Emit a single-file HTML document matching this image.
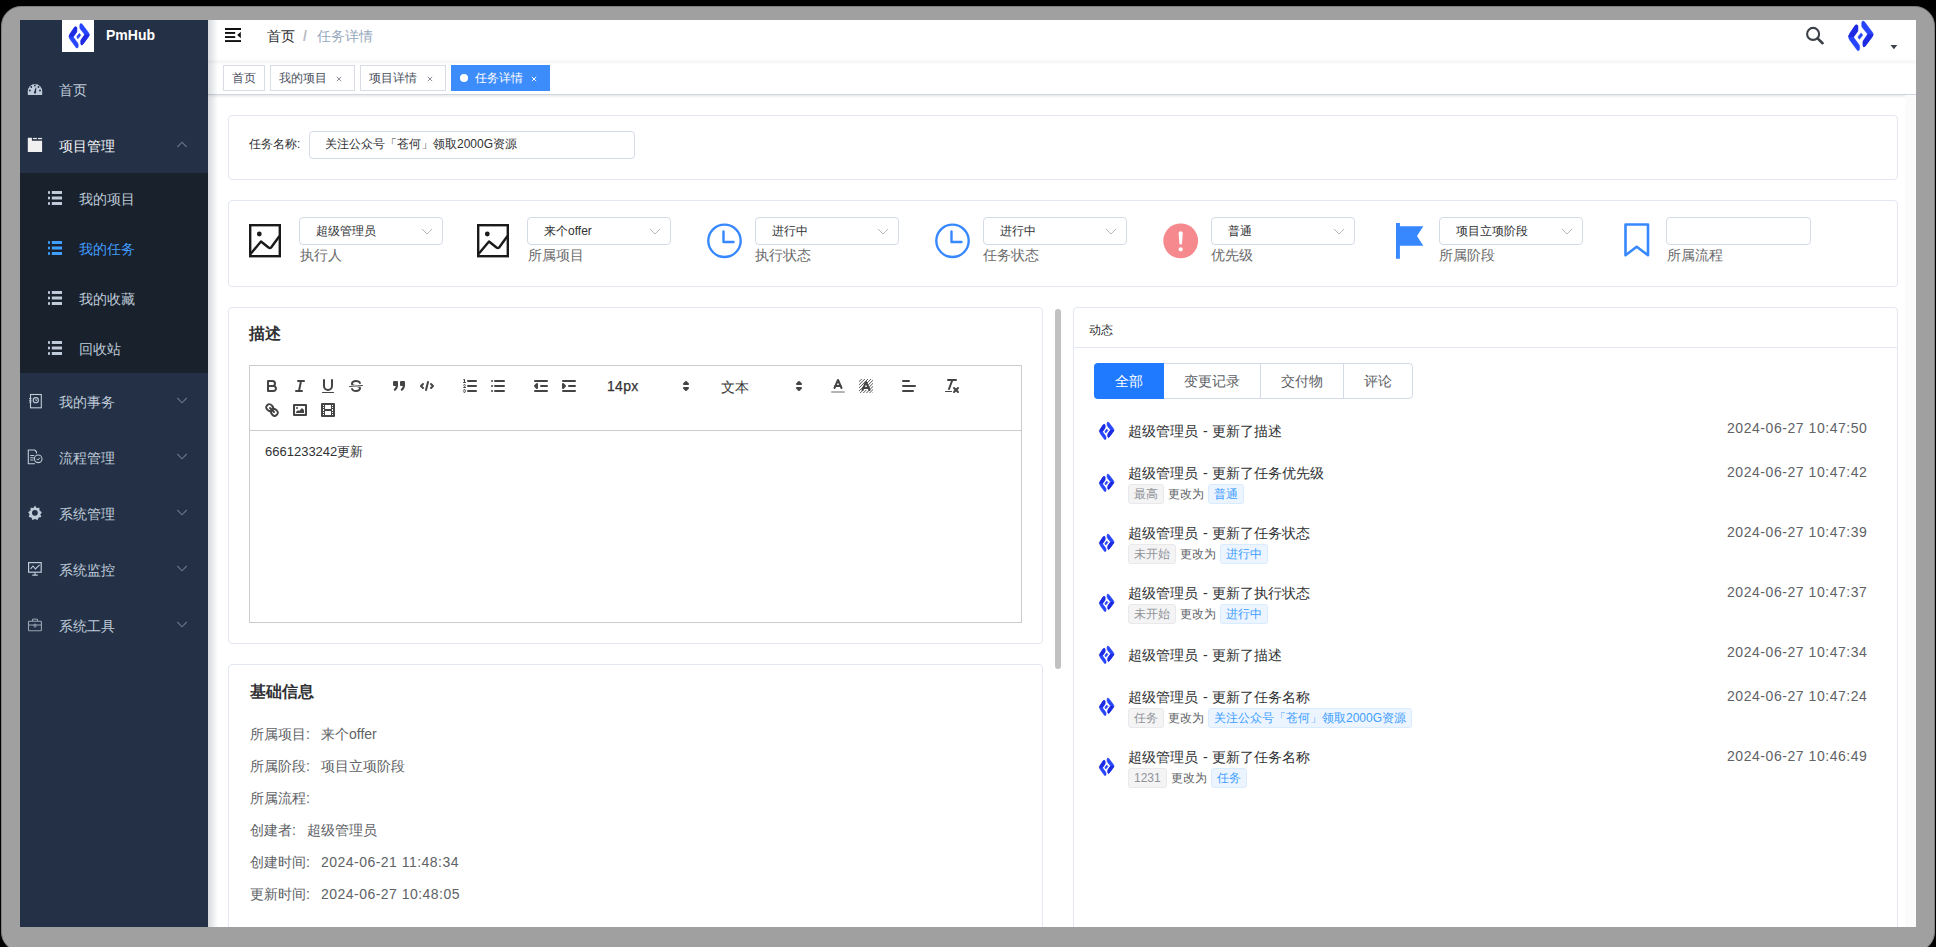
<!DOCTYPE html>
<html><head><meta charset="utf-8">
<style>
*{box-sizing:border-box;margin:0;padding:0}
html,body{width:1936px;height:947px;overflow:hidden;background:#000;font-family:"Liberation Sans",sans-serif;color:#303133}
.a{position:absolute}
#frame{position:absolute;left:1px;top:6px;width:1934px;height:946px;background:#a0a0a0;border-radius:20px;border:1px solid #7e7e7e}
#app{position:absolute;left:20px;top:20px;width:1896px;height:907px;background:#fff;overflow:hidden}
#in{position:absolute;left:-20px;top:-20px;width:1936px;height:947px}
#side{position:absolute;left:20px;top:20px;width:188px;height:907px;background:#233045}
.t{position:absolute;white-space:nowrap}
.mt{font-size:14px;color:#bfcbd9;line-height:20px}
.chev{position:absolute;width:10px;height:6px}
.card{position:absolute;background:#fff;border:1px solid #e2e7f2;border-radius:4px}
.sel{position:absolute;top:217px;width:144px;height:28px;border:1px solid #d4dae6;border-radius:4px;background:#fff}
.sel .v{position:absolute;left:16px;top:6px;font-size:12px;line-height:14px;color:#303133}
.sel svg{position:absolute;left:121px;top:10px}
.lab{position:absolute;top:247px;font-size:14px;line-height:16px;color:#6b6b6b}
.tag{position:absolute;top:65px;height:26px;line-height:24px;border:1px solid #d8dce5;color:#495060;background:#fff;font-size:12px;padding-left:8px}
.tag .x{position:absolute;font-size:11px;top:0}
.tb{position:absolute}
.row .ttl{position:absolute;left:1128px;font-size:14px;line-height:16px;color:#303133;word-spacing:1px}
.tg{position:absolute;height:20px;border-radius:3px;font-size:12px;line-height:18px;padding:0 5px;border:1px solid}
.tg.g{background:#f4f4f5;border-color:#e9e9eb;color:#909399}
.tg.b{background:#ecf5ff;border-color:#d9ecff;color:#409eff}
.cto{position:absolute;font-size:12px;line-height:17px;color:#606266}
.tm{position:absolute;left:1727px;font-size:14px;line-height:16px;color:#606266;letter-spacing:.55px}
.info{position:absolute;left:250px;font-size:14px;line-height:16px;color:#606266}
</style></head><body>
<svg width="0" height="0" style="position:absolute">
 <defs>
  <symbol id="logo" viewBox="0 0 15 18">
   <g fill="none" stroke-width="3.3" stroke-linecap="round" stroke-linejoin="round">
   <path d="M4.9 3.9 L1.9 9.1" stroke="#1f30e8"/>
   <path d="M1.9 9.1 Q1.6 9.6 2 10.2 L5.9 16.4" stroke="#2645fb"/>
   <path d="M8.7 1.5 L12.7 7.4 Q13 8 12.7 8.6" stroke="#2645fb"/>
   <path d="M12.7 8.6 L9.3 13.8" stroke="#1f30e8"/>
   </g>
   <path d="M6.4 10 L7.9 8.2" stroke="#2443f7" stroke-width="2.3" stroke-linecap="round"/>
  </symbol>
  <symbol id="logoL" viewBox="0 0 15 18">
   <g fill="none" stroke-width="2.8" stroke-linecap="round" stroke-linejoin="round">
   <path d="M4.9 3.9 L1.9 9.1" stroke="#1f30e8"/>
   <path d="M1.9 9.1 Q1.6 9.6 2 10.2 L5.9 16.4" stroke="#2645fb"/>
   <path d="M8.7 1.5 L12.7 7.4 Q13 8 12.7 8.6" stroke="#2645fb"/>
   <path d="M12.7 8.6 L9.3 13.8" stroke="#1f30e8"/>
   </g>
   <path d="M6.4 10 L7.9 8.2" stroke="#2443f7" stroke-width="2.1" stroke-linecap="round"/>
  </symbol>
  <symbol id="logoF" viewBox="0 0 30 34">
   <clipPath id="lc"><rect x="0" y="0" width="14.5" height="17.9"/></clipPath>
   <clipPath id="rc"><rect x="14" y="15.3" width="16" height="20"/></clipPath>
   <path id="lp" d="M10.6 5.8 Q12.2 6.0 12.0 8.2 L11.9 11.4 Q11.8 12.2 11.2 13.0 L7.9 17.6 Q7.6 18.1 7.9 18.6 L13.0 25.6 Q13.7 26.6 13.7 28.0 L13.7 29.8 Q13.5 32.4 11.4 31.6 L3.9 21.4 Q1.0 18.0 3.9 14.3 L9.0 6.6 Q9.7 5.7 10.6 5.8 Z" fill="#2645fd" stroke="#2645fd" stroke-linejoin="round"/>
   <path d="M10.6 5.8 Q12.2 6.0 12.0 8.2 L11.9 11.4 Q11.8 12.2 11.2 13.0 L7.9 17.6 Q7.6 18.1 7.9 18.6 L13.0 25.6 Q13.7 26.6 13.7 28.0 L13.7 29.8 Q13.5 32.4 11.4 31.6 L3.9 21.4 Q1.0 18.0 3.9 14.3 L9.0 6.6 Q9.7 5.7 10.6 5.8 Z" fill="#1e2be2" stroke="#1e2be2" stroke-linejoin="round" clip-path="url(#lc)"/>
   <path d="M16.9 1.9 Q18.0 1.8 18.6 2.8 L25.9 12.4 Q28.7 15.2 25.9 18.3 L19.4 27.0 Q17.2 29.4 16.9 26.2 L16.9 23.2 Q16.9 22.2 17.5 21.4 L21.2 16.0 Q21.5 15.4 21.2 14.8 L16.4 8.8 Q15.6 7.8 15.6 6.6 L15.6 3.8 Q15.8 1.9 16.9 1.9 Z" fill="#2645fd" stroke="#2645fd" stroke-linejoin="round"/>
   <path d="M16.9 1.9 Q18.0 1.8 18.6 2.8 L25.9 12.4 Q28.7 15.2 25.9 18.3 L19.4 27.0 Q17.2 29.4 16.9 26.2 L16.9 23.2 Q16.9 22.2 17.5 21.4 L21.2 16.0 Q21.5 15.4 21.2 14.8 L16.4 8.8 Q15.6 7.8 15.6 6.6 L15.6 3.8 Q15.8 1.9 16.9 1.9 Z" fill="#1e2be2" stroke="#1e2be2" stroke-linejoin="round" clip-path="url(#rc)"/>
   <path d="M15.07 13.81 L16.86 16.15 L13.28 20.45 L11.84 17.94 Z" fill="#2443f7" stroke="#2443f7" stroke-linejoin="round"/>
  </symbol>
 </defs>
</svg>
<div id="frame"></div>
<div id="app"><div id="in">
 <!-- sidebar -->
 <div id="side"></div>
 <div class="a" style="left:62px;top:20px;width:32px;height:32px;background:#fff"></div>
 <svg class="a" style="left:66.8px;top:21.6px" width="24.6" height="27.9" viewBox="0 0 30 34"><use href="#logoF" stroke-width="0.6"/></svg>
 <div class="t" style="left:106px;top:27px;color:#fff;font-weight:bold;font-size:14px;line-height:16px">PmHub</div>

 <div class="t mt" style="left:59px;top:80px">首页</div>
 <div class="t mt" style="left:59px;top:136px;color:#f4f4f5">项目管理</div>
 <div class="a" style="left:20px;top:173px;width:188px;height:200px;background:#19212c"></div>
 <div class="t mt" style="left:79px;top:189px">我的项目</div>
 <div class="t mt" style="left:79px;top:239px;color:#409eff">我的任务</div>
 <div class="t mt" style="left:79px;top:289px">我的收藏</div>
 <div class="t mt" style="left:79px;top:339px">回收站</div>
 <div class="t mt" style="left:59px;top:392px">我的事务</div>
 <div class="t mt" style="left:59px;top:448px">流程管理</div>
 <div class="t mt" style="left:59px;top:504px">系统管理</div>
 <div class="t mt" style="left:59px;top:560px">系统监控</div>
 <div class="t mt" style="left:59px;top:616px">系统工具</div>


 <!-- sidebar icons -->
 <svg class="a" style="left:27px;top:82px" width="16" height="14" viewBox="0 0 16 14"><path d="M0.8 12.6 Q0.8 13 1.2 13 H14.8 Q15.2 13 15.2 12.6 V9.3 A7.2 7.2 0 0 0 0.8 9.3 Z" fill="#bfcbd9"/><g fill="#233045"><circle cx="7.9" cy="3.5" r="0.9"/><circle cx="4.3" cy="5" r="0.9"/><circle cx="11.5" cy="5" r="0.9"/><circle cx="2.9" cy="8.5" r="0.9"/><circle cx="13" cy="8.5" r="0.9"/><path d="M6.9 10.6 L8.7 5.6 L9.3 5.8 L9 10.9 Q8.6 11.8 7.7 11.6 Q6.7 11.3 6.9 10.6 Z"/></g></svg>
 <svg class="a" style="left:27px;top:137px" width="16" height="16" viewBox="0 0 16 16"><path d="M0.8 0.7 H4.9 V3.8 H15.1 V15 H0.8 Z" fill="#f0f0f0"/><rect x="5.9" y="0.9" width="4" height="1.3" fill="#e8e8e8"/><rect x="10.9" y="0.9" width="4.2" height="1.3" fill="#e8e8e8"/></svg>
 <svg class="a" style="left:28px;top:393px" width="15" height="16" viewBox="0 0 15 16"><rect x="2.5" y="1.5" width="10.8" height="13.3" fill="none" stroke="#bfcbd9" stroke-width="1.1"/><circle cx="7.8" cy="7.2" r="2.6" fill="none" stroke="#bfcbd9" stroke-width="1.1"/><path d="M7.8 6 V7.4 H9" fill="none" stroke="#bfcbd9" stroke-width="0.9"/><path d="M1 5.5 H3.5 M1 7.3 H3.5 M1 9.1 H3.5" stroke="#bfcbd9" stroke-width="0.9"/></svg>
 <svg class="a" style="left:27px;top:449px" width="16" height="16" viewBox="0 0 16 16"><path d="M9.5 4.5 V2.8 L7.8 1 H1.3 V14.8 H8" fill="none" stroke="#bfcbd9" stroke-width="1.1"/><path d="M3.2 6.5 H7.2 M3.2 8.8 H6.8 M3.2 11 H6.5" stroke="#bfcbd9" stroke-width="1"/><circle cx="11.2" cy="9.8" r="3.8" fill="none" stroke="#bfcbd9" stroke-width="1.1"/><path d="M9.5 9.8 L10.8 11.1 L13 8.6" fill="none" stroke="#bfcbd9" stroke-width="1"/></svg>
 <svg class="a" style="left:27px;top:505px" width="16" height="16" viewBox="0 0 16 16"><path d="M8 0.8 L9.6 3.1 L12.4 3 L12.5 5.7 L14.9 7.4 L13.4 9.5 L14.3 12.1 L11.6 12.7 L10.6 15.3 L8 14.2 L5.4 15.3 L4.4 12.7 L1.7 12.1 L2.6 9.5 L1.1 7.4 L3.5 5.7 L3.6 3 L6.4 3.1 Z" fill="#bfcbd9" transform="translate(0 -0.2)"/><circle cx="7.9" cy="7.8" r="2.9" fill="#233045"/></svg>
 <svg class="a" style="left:27px;top:561px" width="16" height="16" viewBox="0 0 16 16"><rect x="1.6" y="1.6" width="12.6" height="9.6" fill="none" stroke="#bfcbd9" stroke-width="1.2"/><path d="M3.6 7.8 L6 5 L8.4 8 L12.6 3.8" fill="none" stroke="#bfcbd9" stroke-width="1.1"/><path d="M8 11.2 V14 M5.3 14.1 H10.8" stroke="#bfcbd9" stroke-width="1.1"/></svg>
 <svg class="a" style="left:27px;top:618px" width="16" height="15" viewBox="0 0 16 15"><rect x="1.5" y="3.2" width="12.9" height="9.6" rx="0.8" fill="none" stroke="#9aa5b4" stroke-width="1.1"/><path d="M5.5 3.2 V1.2 H10.5 V3.2" fill="none" stroke="#9aa5b4" stroke-width="1"/><path d="M1.5 7 H14.4" stroke="#9aa5b4" stroke-width="1"/><rect x="7" y="6" width="2" height="3.2" rx="1" fill="none" stroke="#9aa5b4" stroke-width="0.9"/></svg>
 <svg class="a" style="left:48px;top:191px" width="15" height="15" viewBox="0 0 15 15"><g fill="#bfcbd9"><rect x="0" y="0.2" width="2" height="2.6"/><rect x="3.8" y="0" width="10.2" height="3"/><rect x="0" y="5.7" width="2" height="2.6"/><rect x="3.8" y="5.5" width="10.2" height="3"/><rect x="0" y="11.2" width="2" height="2.6"/><rect x="3.8" y="11" width="10.2" height="3"/></g></svg>
 <svg class="a" style="left:48px;top:241px" width="15" height="15" viewBox="0 0 15 15"><g fill="#409eff"><rect x="0" y="0.2" width="2" height="2.6"/><rect x="3.8" y="0" width="10.2" height="3"/><rect x="0" y="5.7" width="2" height="2.6"/><rect x="3.8" y="5.5" width="10.2" height="3"/><rect x="0" y="11.2" width="2" height="2.6"/><rect x="3.8" y="11" width="10.2" height="3"/></g></svg>
 <svg class="a" style="left:48px;top:291px" width="15" height="15" viewBox="0 0 15 15"><g fill="#bfcbd9"><rect x="0" y="0.2" width="2" height="2.6"/><rect x="3.8" y="0" width="10.2" height="3"/><rect x="0" y="5.7" width="2" height="2.6"/><rect x="3.8" y="5.5" width="10.2" height="3"/><rect x="0" y="11.2" width="2" height="2.6"/><rect x="3.8" y="11" width="10.2" height="3"/></g></svg>
 <svg class="a" style="left:48px;top:341px" width="15" height="15" viewBox="0 0 15 15"><g fill="#bfcbd9"><rect x="0" y="0.2" width="2" height="2.6"/><rect x="3.8" y="0" width="10.2" height="3"/><rect x="0" y="5.7" width="2" height="2.6"/><rect x="3.8" y="5.5" width="10.2" height="3"/><rect x="0" y="11.2" width="2" height="2.6"/><rect x="3.8" y="11" width="10.2" height="3"/></g></svg>
 <svg class="a" style="left:176px;top:141px" width="12" height="7" viewBox="0 0 12 7"><path d="M1.3 6 L6 1.2 L10.7 6" fill="none" stroke="#6b7585" stroke-width="1.1"/></svg>
 <svg class="a" style="left:176px;top:397px" width="12" height="7" viewBox="0 0 12 7"><path d="M1.3 1 L6 5.8 L10.7 1" fill="none" stroke="#6b7585" stroke-width="1.1"/></svg>
 <svg class="a" style="left:176px;top:453px" width="12" height="7" viewBox="0 0 12 7"><path d="M1.3 1 L6 5.8 L10.7 1" fill="none" stroke="#6b7585" stroke-width="1.1"/></svg>
 <svg class="a" style="left:176px;top:509px" width="12" height="7" viewBox="0 0 12 7"><path d="M1.3 1 L6 5.8 L10.7 1" fill="none" stroke="#6b7585" stroke-width="1.1"/></svg>
 <svg class="a" style="left:176px;top:565px" width="12" height="7" viewBox="0 0 12 7"><path d="M1.3 1 L6 5.8 L10.7 1" fill="none" stroke="#6b7585" stroke-width="1.1"/></svg>
 <svg class="a" style="left:176px;top:621px" width="12" height="7" viewBox="0 0 12 7"><path d="M1.3 1 L6 5.8 L10.7 1" fill="none" stroke="#6b7585" stroke-width="1.1"/></svg>

 <!-- navbar -->
 <div class="a" style="left:208px;top:20px;width:1708px;height:41px;background:#fff"></div>
 <div class="t" style="left:267px;top:28px;font-size:14px;line-height:16px;color:#303133">首页</div>
 <div class="t" style="left:303px;top:28px;font-size:14px;line-height:16px;color:#b4bac4;font-weight:bold">/</div>
 <div class="t" style="left:317px;top:28px;font-size:14px;line-height:16px;color:#97a8be">任务详情</div>


 <svg class="a" style="left:224px;top:27px" width="18" height="16" viewBox="0 0 18 16"><g fill="#111"><rect x="1" y="1" width="16" height="2"/><rect x="1" y="5" width="10.2" height="1.9"/><rect x="1" y="9.1" width="10.2" height="1.9"/><rect x="1" y="13.1" width="16" height="1.9"/><path d="M16.8 4.8 V11.2 L13.2 8 Z"/></g></svg>
 <svg class="a" style="left:1804px;top:25px" width="22" height="22" viewBox="0 0 22 22"><circle cx="9.1" cy="8.9" r="6" fill="none" stroke="#3b3f47" stroke-width="2.1"/><path d="M13.6 13.4 L18.6 18.2" stroke="#3b3f47" stroke-width="2.6" stroke-linecap="round"/></svg>
 <svg class="a" style="left:1846px;top:19px" width="30" height="34"><use href="#logoF" stroke-width="0.3"/></svg>
 <svg class="a" style="left:1890px;top:44px" width="8" height="6" viewBox="0 0 8 6"><path d="M0.5 1 H7.3 L3.9 5.2 Z" fill="#3d4149"/></svg>
 <!-- tags view -->
 <div class="a" style="left:208px;top:61px;width:1708px;height:34px;background:#fff;border-bottom:1px solid #d0d5e2;box-shadow:0 1px 3px 0 rgba(0,0,0,.12)"></div>
 <div class="a" style="left:208px;top:61px;width:1708px;height:4px;background:linear-gradient(to bottom,rgba(0,0,0,.045),rgba(0,0,0,0))"></div>
 <div class="tag" style="left:223px;width:42px">首页</div>
 <div class="tag" style="left:270px;width:85px">我的项目<svg class="a" style="left:65px;top:10px" width="6" height="6" viewBox="0 0 6 6"><path d="M0.8 0.8 L5.2 5.2 M5.2 0.8 L0.8 5.2" stroke="#7d828c" stroke-width="0.9"/></svg></div>
 <div class="tag" style="left:360px;width:86px">项目详情<svg class="a" style="left:66px;top:10px" width="6" height="6" viewBox="0 0 6 6"><path d="M0.8 0.8 L5.2 5.2 M5.2 0.8 L0.8 5.2" stroke="#7d828c" stroke-width="0.9"/></svg></div>
 <div class="tag" style="left:451px;width:99px;background:#3d8cfc;border-color:#3d8cfc;color:#fff;padding-left:23px"><span class="a" style="left:8px;top:8px;width:8px;height:8px;border-radius:50%;background:#fff"></span>任务详情<svg class="a" style="left:79px;top:10px" width="6" height="6" viewBox="0 0 6 6"><path d="M0.8 0.8 L5.2 5.2 M5.2 0.8 L0.8 5.2" stroke="#fff" stroke-width="1"/></svg></div>

 <div class="a" style="left:208px;top:20px;width:10px;height:907px;background:linear-gradient(to right,rgba(0,21,41,.16),rgba(0,21,41,0))"></div>

 <div class="a" style="left:1905px;top:95px;width:11px;height:832px;background:#fbfbfc"></div>
 <!-- card 1 -->
 <div class="card" style="left:228px;top:115px;width:1670px;height:65px"></div>
 <div class="t" style="left:249px;top:137px;font-size:12px;line-height:14px;color:#303133">任务名称:</div>
 <div class="a" style="left:309px;top:131px;width:326px;height:28px;border:1px solid #d4dae6;border-radius:4px;background:#fff"></div>
 <div class="t" style="left:325px;top:137px;font-size:12px;line-height:14px;color:#303133">关注公众号「苍何」领取2000G资源</div>

 <!-- card 2 -->
 <div class="card" style="left:228px;top:200px;width:1670px;height:87px"></div>

 <!-- card 2 items -->
 <svg class="a" style="left:249px;top:224px" width="32" height="34" viewBox="0 0 32 34"><rect x="1.2" y="1.2" width="29.6" height="31" fill="none" stroke="#1a1a1a" stroke-width="2.4"/><circle cx="10.3" cy="10" r="2.4" fill="#1a1a1a"/><path d="M1.5 30 L12 17.5 L19.5 23.5 Q21 24.5 22.3 23.3 L30.5 12" fill="none" stroke="#1a1a1a" stroke-width="2.4" stroke-linejoin="round"/></svg>
 <div class="sel" style="left:299px"><span class="v">超级管理员</span><svg width="12" height="8" viewBox="0 0 12 8"><path d="M1 1 L6 6 L11 1" fill="none" stroke="#b4b8bf" stroke-width="1"/></svg></div>
 <div class="lab" style="left:300px">执行人</div>

 <svg class="a" style="left:477px;top:224px" width="32" height="34" viewBox="0 0 32 34"><rect x="1.2" y="1.2" width="29.6" height="31" fill="none" stroke="#1a1a1a" stroke-width="2.4"/><circle cx="10.3" cy="10" r="2.4" fill="#1a1a1a"/><path d="M1.5 30 L12 17.5 L19.5 23.5 Q21 24.5 22.3 23.3 L30.5 12" fill="none" stroke="#1a1a1a" stroke-width="2.4" stroke-linejoin="round"/></svg>
 <div class="sel" style="left:527px"><span class="v">来个offer</span><svg width="12" height="8" viewBox="0 0 12 8"><path d="M1 1 L6 6 L11 1" fill="none" stroke="#b4b8bf" stroke-width="1"/></svg></div>
 <div class="lab" style="left:528px">所属项目</div>

 <svg class="a" style="left:706px;top:222px" width="38" height="38" viewBox="0 0 38 38"><circle cx="18.5" cy="18.8" r="16.2" fill="none" stroke="#3788fe" stroke-width="2.4"/><path d="M17.5 9.5 V20 H27.5" fill="none" stroke="#3788fe" stroke-width="2.4" stroke-linecap="round" stroke-linejoin="round"/></svg>
 <div class="sel" style="left:755px"><span class="v">进行中</span><svg width="12" height="8" viewBox="0 0 12 8"><path d="M1 1 L6 6 L11 1" fill="none" stroke="#b4b8bf" stroke-width="1"/></svg></div>
 <div class="lab" style="left:755px">执行状态</div>

 <svg class="a" style="left:934px;top:222px" width="38" height="38" viewBox="0 0 38 38"><circle cx="18.5" cy="18.8" r="16.2" fill="none" stroke="#3788fe" stroke-width="2.4"/><path d="M17.5 9.5 V20 H27.5" fill="none" stroke="#3788fe" stroke-width="2.4" stroke-linecap="round" stroke-linejoin="round"/></svg>
 <div class="sel" style="left:983px"><span class="v">进行中</span><svg width="12" height="8" viewBox="0 0 12 8"><path d="M1 1 L6 6 L11 1" fill="none" stroke="#b4b8bf" stroke-width="1"/></svg></div>
 <div class="lab" style="left:983px">任务状态</div>

 <svg class="a" style="left:1162px;top:222px" width="38" height="38" viewBox="0 0 38 38"><circle cx="18.7" cy="18.9" r="17.4" fill="#f5898d"/><path d="M16.6 11 Q16.7 9.2 18.7 9.2 Q20.7 9.2 20.8 11 L20 21.6 Q19.9 22.6 18.7 22.6 Q17.5 22.6 17.4 21.6 Z" fill="#fff"/><circle cx="18.7" cy="27.3" r="2.1" fill="#fff"/></svg>
 <div class="sel" style="left:1211px"><span class="v">普通</span><svg width="12" height="8" viewBox="0 0 12 8"><path d="M1 1 L6 6 L11 1" fill="none" stroke="#b4b8bf" stroke-width="1"/></svg></div>
 <div class="lab" style="left:1211px">优先级</div>

 <svg class="a" style="left:1394px;top:222px" width="32" height="38" viewBox="0 0 32 38"><path d="M2 1 H5.9 V4.2 H29.3 L23 14 L29.3 23.8 H5.9 V36.8 H2 Z" fill="#3788fe"/></svg>
 <div class="sel" style="left:1439px"><span class="v">项目立项阶段</span><svg width="12" height="8" viewBox="0 0 12 8"><path d="M1 1 L6 6 L11 1" fill="none" stroke="#b4b8bf" stroke-width="1"/></svg></div>
 <div class="lab" style="left:1439px">所属阶段</div>

 <svg class="a" style="left:1622px;top:221px" width="30" height="38" viewBox="0 0 30 38"><path d="M3.5 3.5 H26 V34.2 L14.7 25.8 L3.5 34.2 Z" fill="none" stroke="#3788fe" stroke-width="2.6" stroke-linejoin="round"/></svg>
 <div class="sel" style="left:1666px;width:145px"></div>
 <div class="lab" style="left:1667px">所属流程</div>

 <!-- card 3: desc -->
 <div class="card" style="left:228px;top:307px;width:815px;height:337px"></div>
 <div class="t" style="left:249px;top:325px;font-size:16px;line-height:18px;font-weight:bold;color:#303133">描述</div>
 <div class="a" style="left:249px;top:365px;width:773px;height:258px;border:1px solid #ccc;background:#fff"></div>
 <div class="a" style="left:249px;top:430px;width:773px;height:1px;background:#ccc"></div>
 <svg width="0" height="0" class="a"><defs><pattern id="hatch" width="2.2" height="2.2" patternUnits="userSpaceOnUse" patternTransform="rotate(45)"><rect x="0" y="0" width="0.7" height="2.2" fill="#555"/></pattern></defs></svg>
 <svg class="a" style="left:263px;top:377px" width="18" height="18" viewBox="0 0 18 18"><path fill="none" stroke="#444" stroke-width="2" stroke-linecap="round" stroke-linejoin="round" d="M5,4H9.5A2.5,2.5,0,0,1,12,6.5v0A2.5,2.5,0,0,1,9.5,9H5A0,0,0,0,1,5,9V4A0,0,0,0,1,5,4Z"/><path fill="none" stroke="#444" stroke-width="2" stroke-linecap="round" stroke-linejoin="round" d="M5,9h5.5A2.5,2.5,0,0,1,13,11.5v0A2.5,2.5,0,0,1,10.5,14H5a0,0,0,0,1,0,0V9A0,0,0,0,1,5,9Z"/></svg>
 <svg class="a" style="left:291px;top:377px" width="18" height="18" viewBox="0 0 18 18"><g fill="none" stroke="#444" stroke-width="2" stroke-linecap="round" stroke-linejoin="round"><line x1="7" x2="13" y1="4" y2="4"/><line x1="5" x2="11" y1="14" y2="14"/><line x1="8" x2="10" y1="14" y2="4"/></g></svg>
 <svg class="a" style="left:319px;top:377px" width="18" height="18" viewBox="0 0 18 18"><path fill="none" stroke="#444" stroke-width="2" stroke-linecap="round" stroke-linejoin="round" d="M5,3V9a4.012,4.012,0,0,0,4,4H9a4.012,4.012,0,0,0,4-4V3"/><rect fill="#444" height="1" rx="0.5" ry="0.5" width="12" x="3" y="15"/></svg>
 <svg class="a" style="left:347px;top:377px" width="18" height="18" viewBox="0 0 18 18"><line fill="none" stroke="#444" stroke-width="1" stroke-linecap="round" stroke-linejoin="round" x1="15.5" x2="2.5" y1="8.5" y2="9.5"/><path fill="#444" d="M9.007,8C6.542,7.791,6,7.519,6,6.5,6,5.792,7.283,5,9,5c1.571,0,2.765.679,2.969,1.309a1,1,0,0,0,1.9-.617C13.356,4.106,11.354,3,9,3,6.2,3,4,4.538,4,6.5a3.2,3.2,0,0,0,.5,1.843Z"/><path fill="#444" d="M8.984,10C11.457,10.208,12,10.479,12,11.5c0,0.708-1.283,1.5-3,1.5-1.571,0-2.765-.679-2.969-1.309a1,1,0,1,0-1.9.617C4.644,13.894,6.646,15,9,15c2.8,0,5-1.538,5-3.5a3.2,3.2,0,0,0-.5-1.843Z"/></svg>
 <svg class="a" style="left:390px;top:377px" width="18" height="18" viewBox="0 0 18 18"><g fill="#444" stroke="#444" stroke-width="2" stroke-linejoin="round"><rect height="3" width="3" x="4" y="5"/><rect height="3" width="3" x="11" y="5"/><path d="M7,8c0,4.031-3,5-3,5"/><path d="M14,8c0,4.031-3,5-3,5"/></g></svg>
 <svg class="a" style="left:418px;top:377px" width="18" height="18" viewBox="0 0 18 18"><g fill="none" stroke="#444" stroke-width="2" stroke-linecap="round" stroke-linejoin="round"><polyline points="5 7 3 9 5 11"/><polyline points="13 7 15 9 13 11"/><line x1="10" x2="8" y1="5" y2="13"/></g></svg>
 <svg class="a" style="left:461px;top:377px" width="18" height="18" viewBox="0 0 18 18"><g fill="none" stroke="#444" stroke-width="2" stroke-linecap="round" stroke-linejoin="round"><line x1="7" x2="15" y1="4" y2="4"/><line x1="7" x2="15" y1="9" y2="9"/><line x1="7" x2="15" y1="14" y2="14"/></g><line fill="none" stroke="#444" stroke-width="1" stroke-linecap="round" stroke-linejoin="round" x1="2.5" x2="4.5" y1="5.5" y2="5.5"/><path fill="#444" d="M3.5,6A0.5,0.5,0,0,1,3,5.5V3.085l-0.276.138A0.5,0.5,0,0,1,2.053,3c-0.124-.247-0.023-0.324.224-0.447l1-.5A0.5,0.5,0,0,1,4,2.5v3A0.5,0.5,0,0,1,3.5,6Z"/><path fill="none" stroke="#444" stroke-width="1" stroke-linecap="round" stroke-linejoin="round" d="M4.5,10.5h-2c0-.234,1.85-1.076,1.85-2.234A0.959,0.959,0,0,0,2.5,8.156"/><path fill="none" stroke="#444" stroke-width="1" stroke-linecap="round" stroke-linejoin="round" d="M2.5,14.846a0.959,0.959,0,0,0,1.85-.109A0.7,0.7,0,0,0,3.75,14a0.688,0.688,0,0,0,.6-0.736,0.959,0.959,0,0,0-1.85-.109"/></svg>
 <svg class="a" style="left:489px;top:377px" width="18" height="18" viewBox="0 0 18 18"><g fill="none" stroke="#444" stroke-width="2" stroke-linecap="round" stroke-linejoin="round"><line x1="6" x2="15" y1="4" y2="4"/><line x1="6" x2="15" y1="9" y2="9"/><line x1="6" x2="15" y1="14" y2="14"/><line x1="3" x2="3" y1="4" y2="4"/><line x1="3" x2="3" y1="9" y2="9"/><line x1="3" x2="3" y1="14" y2="14"/></g></svg>
 <svg class="a" style="left:532px;top:377px" width="18" height="18" viewBox="0 0 18 18"><g fill="none" stroke="#444" stroke-width="2" stroke-linecap="round" stroke-linejoin="round"><line x1="3" x2="15" y1="14" y2="14"/><line x1="3" x2="15" y1="4" y2="4"/><line x1="9" x2="15" y1="9" y2="9"/><polyline points="5 7 5 11 3 9 5 7"/></g></svg>
 <svg class="a" style="left:560px;top:377px" width="18" height="18" viewBox="0 0 18 18"><g fill="none" stroke="#444" stroke-width="2" stroke-linecap="round" stroke-linejoin="round"><line x1="3" x2="15" y1="14" y2="14"/><line x1="3" x2="15" y1="4" y2="4"/><line x1="9" x2="15" y1="9" y2="9"/><polyline fill="#444" points="3 7 3 11 5 9 3 7"/></g></svg>
 <svg class="a" style="left:829px;top:377px" width="18" height="18" viewBox="0 0 18 18"><line x1="3" x2="15" y1="15" y2="15" stroke="#444" stroke-opacity=".4" stroke-width="2" stroke-linecap="round"/><g fill="none" stroke="#444" stroke-width="2" stroke-linecap="round" stroke-linejoin="round"><polyline points="5.5 11 9 3 12.5 11"/><line x1="11.63" x2="6.38" y1="9" y2="9"/></g></svg>
 <svg class="a" style="left:857px;top:377px" width="18" height="18" viewBox="0 0 18 18"><rect x="2" y="2" width="14" height="14" fill="url(#hatch)"/><polyline points="5.5 13 9 5 12.5 13" fill="#fff" stroke="none"/><g fill="none" stroke="#444" stroke-width="2" stroke-linecap="round" stroke-linejoin="round"><polyline points="5.5 13 9 5 12.5 13"/><line x1="11.63" x2="6.38" y1="11" y2="11"/></g></svg>
 <svg class="a" style="left:900px;top:377px" width="18" height="18" viewBox="0 0 18 18"><g fill="none" stroke="#444" stroke-width="2" stroke-linecap="round" stroke-linejoin="round"><line x1="3" x2="15" y1="9" y2="9"/><line x1="3" x2="13" y1="14" y2="14"/><line x1="3" x2="9" y1="4" y2="4"/></g></svg>
 <svg class="a" style="left:943px;top:377px" width="18" height="18" viewBox="0 0 18 18"><g fill="none" stroke="#444" stroke-width="2" stroke-linecap="round" stroke-linejoin="round"><line x1="5" x2="13" y1="3" y2="3"/><line x1="6" x2="9.35" y1="12" y2="3"/><line x1="11" x2="15" y1="11" y2="15"/><line x1="15" x2="11" y1="11" y2="15"/></g><rect fill="#444" height="1" rx="0.5" ry="0.5" width="7" x="2" y="14"/></svg>
 <svg class="a" style="left:263px;top:401px" width="18" height="18" viewBox="0 0 18 18"><g fill="none" stroke="#444" stroke-width="2" stroke-linecap="round" stroke-linejoin="round"><line x1="7" x2="11" y1="7" y2="11"/><path d="M8.9,4.577a3.476,3.476,0,0,1,.36,4.679A3.476,3.476,0,0,1,4.577,8.9C3.185,7.5,2.035,6.4,4.217,4.217S7.5,3.185,8.9,4.577Z"/><path d="M13.423,9.1a3.476,3.476,0,0,0-4.679-.36,3.476,3.476,0,0,0,.36,4.679c1.392,1.392,2.5,2.542,4.679.36S14.815,10.5,13.423,9.1Z"/></g></svg>
 <svg class="a" style="left:291px;top:401px" width="18" height="18" viewBox="0 0 18 18"><rect fill="none" stroke="#444" stroke-width="2" stroke-linecap="round" stroke-linejoin="round" height="10" width="12" x="3" y="4"/><circle fill="#444" cx="6" cy="7" r="1"/><polyline fill="#444" points="5 12 5 11 7 9 8 10 11 7 13 9 13 12 5 12"/></svg>
 <svg class="a" style="left:319px;top:401px" width="18" height="18" viewBox="0 0 18 18"><rect fill="none" stroke="#444" stroke-width="2" stroke-linecap="round" stroke-linejoin="round" height="12" width="12" x="3" y="3"/><g fill="#444"><rect height="12" width="1" x="5" y="3"/><rect height="12" width="1" x="12" y="3"/><rect height="2" width="8" x="5" y="8"/><rect height="1" width="3" x="3" y="5"/><rect height="1" width="3" x="3" y="7"/><rect height="1" width="3" x="3" y="10"/><rect height="1" width="3" x="3" y="12"/><rect height="1" width="3" x="12" y="5"/><rect height="1" width="3" x="12" y="7"/><rect height="1" width="3" x="12" y="10"/><rect height="1" width="3" x="12" y="12"/></g></svg>
 <svg class="a" style="left:677px;top:377px" width="18" height="18" viewBox="0 0 18 18"><g fill="#444" stroke="#444" stroke-width="2" stroke-linejoin="round"><polygon points="7 11 9 13 11 11 7 11"/><polygon points="7 7 9 5 11 7 7 7"/></g></svg>
 <svg class="a" style="left:790px;top:377px" width="18" height="18" viewBox="0 0 18 18"><g fill="#444" stroke="#444" stroke-width="2" stroke-linejoin="round"><polygon points="7 11 9 13 11 11 7 11"/><polygon points="7 7 9 5 11 7 7 7"/></g></svg>
 <div class="t" style="left:607px;top:377px;font-size:14px;line-height:18px;color:#333;letter-spacing:.3px;-webkit-text-stroke:.25px #333">14px</div>
 <div class="t" style="left:721px;top:378px;font-size:14px;line-height:18px;color:#333">文本</div>
 <div class="t" style="left:265px;top:444px;font-size:13px;line-height:15px;color:#303133">6661233242更新</div>

 <!-- card 4: basic info -->
 <div class="card" style="left:228px;top:664px;width:815px;height:300px"></div>
 <div class="t" style="left:250px;top:683px;font-size:16px;line-height:18px;font-weight:bold;color:#303133">基础信息</div>
 <div class="info" style="top:726px">所属项目:</div><div class="info" style="top:726px;left:321px">来个offer</div>
 <div class="info" style="top:758px">所属阶段:</div><div class="info" style="top:758px;left:321px">项目立项阶段</div>
 <div class="info" style="top:790px">所属流程:</div>
 <div class="info" style="top:822px">创建者:</div><div class="info" style="top:822px;left:307px">超级管理员</div>
 <div class="info" style="top:854px">创建时间:</div><div class="info" style="top:854px;left:321px;letter-spacing:.47px">2024-06-21 11:48:34</div>
 <div class="info" style="top:886px">更新时间:</div><div class="info" style="top:886px;left:321px;letter-spacing:.47px">2024-06-27 10:48:05</div>

 <!-- scrollbar -->
 <div class="a" style="left:1055px;top:309px;width:6px;height:360px;border-radius:3px;background:#c1c1c1"></div>

 <!-- right card -->
 <div class="card" style="left:1073px;top:307px;width:825px;height:700px"></div>
 <div class="a" style="left:1074px;top:347px;width:823px;height:1px;background:#e2e7f2"></div>
 <div class="t" style="left:1089px;top:323px;font-size:12px;line-height:14px;color:#303133">动态</div>
 <div class="a" style="left:1094px;top:363px;width:319px;height:36px;border:1px solid #d4dae6;border-radius:4px;background:#fff"></div>
 <div class="a" style="left:1094px;top:363px;width:70px;height:36px;border-radius:4px 0 0 4px;background:#1f7aff"></div>
 <div class="a" style="left:1260px;top:364px;width:1px;height:34px;background:#d4dae6"></div>
 <div class="a" style="left:1343px;top:364px;width:1px;height:34px;background:#d4dae6"></div>
 <div class="t" style="left:1115px;top:373px;font-size:14px;line-height:16px;color:#fff">全部</div>
 <div class="t" style="left:1184px;top:373px;font-size:14px;line-height:16px;color:#606266">变更记录</div>
 <div class="t" style="left:1281px;top:373px;font-size:14px;line-height:16px;color:#606266">交付物</div>
 <div class="t" style="left:1364px;top:373px;font-size:14px;line-height:16px;color:#606266">评论</div>
 <div class="row"><div class="ttl" style="top:423px">超级管理员 - 更新了描述</div>
  <div class="t tm" style="top:420px">2024-06-27 10:47:50</div>
  <svg class="a" style="left:1098px;top:420.9px" width="17.55" height="19.9" viewBox="0 0 30 34"><use href="#logoF" stroke-width="1.1"/></svg></div>
 <div class="row"><div class="ttl" style="top:465px">超级管理员 - 更新了任务优先级</div>
  <div class="a" style="left:1128px;top:484px;display:flex;align-items:center;height:20px"><span class="tg g" style="position:relative">最高</span><span class="cto" style="position:relative;margin:0 4px 0 4px">更改为</span><span class="tg b" style="position:relative">普通</span></div>
  <div class="t tm" style="top:464px">2024-06-27 10:47:42</div>
  <svg class="a" style="left:1098px;top:472.9px" width="17.55" height="19.9" viewBox="0 0 30 34"><use href="#logoF" stroke-width="1.1"/></svg></div>
 <div class="row"><div class="ttl" style="top:525px">超级管理员 - 更新了任务状态</div>
  <div class="a" style="left:1128px;top:544px;display:flex;align-items:center;height:20px"><span class="tg g" style="position:relative">未开始</span><span class="cto" style="position:relative;margin:0 4px 0 4px">更改为</span><span class="tg b" style="position:relative">进行中</span></div>
  <div class="t tm" style="top:524px">2024-06-27 10:47:39</div>
  <svg class="a" style="left:1098px;top:532.9px" width="17.55" height="19.9" viewBox="0 0 30 34"><use href="#logoF" stroke-width="1.1"/></svg></div>
 <div class="row"><div class="ttl" style="top:585px">超级管理员 - 更新了执行状态</div>
  <div class="a" style="left:1128px;top:604px;display:flex;align-items:center;height:20px"><span class="tg g" style="position:relative">未开始</span><span class="cto" style="position:relative;margin:0 4px 0 4px">更改为</span><span class="tg b" style="position:relative">进行中</span></div>
  <div class="t tm" style="top:584px">2024-06-27 10:47:37</div>
  <svg class="a" style="left:1098px;top:592.9px" width="17.55" height="19.9" viewBox="0 0 30 34"><use href="#logoF" stroke-width="1.1"/></svg></div>
 <div class="row"><div class="ttl" style="top:647px">超级管理员 - 更新了描述</div>
  <div class="t tm" style="top:644px">2024-06-27 10:47:34</div>
  <svg class="a" style="left:1098px;top:644.9px" width="17.55" height="19.9" viewBox="0 0 30 34"><use href="#logoF" stroke-width="1.1"/></svg></div>
 <div class="row"><div class="ttl" style="top:689px">超级管理员 - 更新了任务名称</div>
  <div class="a" style="left:1128px;top:708px;display:flex;align-items:center;height:20px"><span class="tg g" style="position:relative">任务</span><span class="cto" style="position:relative;margin:0 4px 0 4px">更改为</span><span class="tg b" style="position:relative">关注公众号「苍何」领取2000G资源</span></div>
  <div class="t tm" style="top:688px">2024-06-27 10:47:24</div>
  <svg class="a" style="left:1098px;top:696.9px" width="17.55" height="19.9" viewBox="0 0 30 34"><use href="#logoF" stroke-width="1.1"/></svg></div>
 <div class="row"><div class="ttl" style="top:749px">超级管理员 - 更新了任务名称</div>
  <div class="a" style="left:1128px;top:768px;display:flex;align-items:center;height:20px"><span class="tg g" style="position:relative">1231</span><span class="cto" style="position:relative;margin:0 4px 0 4px">更改为</span><span class="tg b" style="position:relative">任务</span></div>
  <div class="t tm" style="top:748px">2024-06-27 10:46:49</div>
  <svg class="a" style="left:1098px;top:756.9px" width="17.55" height="19.9" viewBox="0 0 30 34"><use href="#logoF" stroke-width="1.1"/></svg></div>
</div></div>
</body></html>
